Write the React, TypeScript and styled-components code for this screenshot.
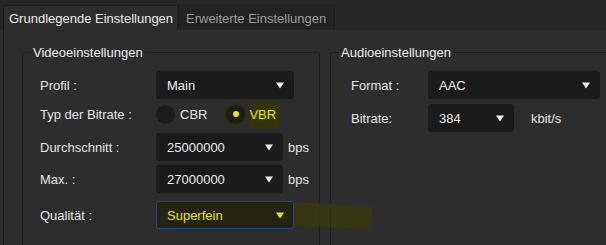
import styled, { createGlobalStyle } from "styled-components"

const GlobalStyle = createGlobalStyle`
    body {
        margin: 0;
        background: #2d2d2d;
        font-family: "Liberation Sans", Arial, sans-serif;
        font-size: 13px;
        color: #e4e4e4;
    }
`

const Caret = ({ color = "#f0f0f0" }: { color?: string }) => (
    <svg width="8" height="7" viewBox="0 0 8 7">
        <path d="M0 0.5 H8 L4 6.5 Z" fill={color} />
    </svg>
)

type DropdownProps = { value: string; width: number; active?: boolean }

const Dropdown = ({ value, width, active }: DropdownProps) => (
    <Select $width={width} $active={active}>
        <span>{value}</span>
        <Caret color={active ? "#e6e600" : "#f0f0f0"} />
    </Select>
)

export default function App() {
    return (
        <>
            <GlobalStyle />
            <Window>
                <TabBar>
                    <Tab $active>Grundlegende Einstellungen</Tab>
                    <Tab>Erweiterte Einstellungen</Tab>
                </TabBar>
                <Panel>
                    <Group $width={298}>
                        <legend>Videoeinstellungen</legend>
                        <VideoGrid>
                            <Label>Profil :</Label>
                            <Dropdown value="Main" width={138} />

                            <Label>Typ der Bitrate :</Label>
                            <RadioRow>
                                <Radio>
                                    <Dot />
                                    <RadioText>CBR</RadioText>
                                </Radio>
                                <Radio>
                                    <Dot $checked />
                                    <RadioText $checked>VBR</RadioText>
                                </Radio>
                            </RadioRow>

                            <Label>Durchschnitt :</Label>
                            <Field>
                                <Dropdown value="25000000" width={127} />
                                <Unit>bps</Unit>
                            </Field>

                            <Label>Max. :</Label>
                            <Field>
                                <Dropdown value="27000000" width={127} />
                                <Unit>bps</Unit>
                            </Field>

                            <Label>Qualität :</Label>
                            <Field>
                                <Dropdown value="Superfein" width={138} active />
                                <Marker width="220" height="40" viewBox="0 0 220 40">
                                    <path
                                        d="M134 5 L175 7 L216 10 L214 32 L170 30 L136 28 Z"
                                        fill="#3c3c00"
                                        opacity="0.6"
                                    />
                                    <path d="M3 28 L24 29 L23 32 L4 33 Z" fill="#3c3c00" opacity="0.6" />
                                </Marker>
                            </Field>
                        </VideoGrid>
                    </Group>
                    <Group $width={290}>
                        <legend>Audioeinstellungen</legend>
                        <AudioGrid>
                            <Label>Format :</Label>
                            <Dropdown value="AAC" width={172} />

                            <Label>Bitrate:</Label>
                            <Field $gap={17}>
                                <Dropdown value="384" width={86} />
                                <Unit>kbit/s</Unit>
                            </Field>
                        </AudioGrid>
                    </Group>
                </Panel>
            </Window>
        </>
    )
}

const Window = styled.div`
    width: 606px;
    height: 245px;
    overflow: hidden;
    display: flex;
    flex-direction: column;
    background: #2d2d2d;
`

const TabBar = styled.div`
    height: 30px;
    flex: none;
    display: flex;
    align-items: flex-end;
    padding-left: 3px;
    background: #262626;
`

const Tab = styled.div<{ $active?: boolean }>`
    height: 25px;
    box-sizing: border-box;
    padding: 0 ${(p) => (p.$active ? "7px 0 5px" : "9px 0 7px")};
    display: flex;
    align-items: center;
    border: 1px solid #1c1c1c;
    border-bottom: none;
    background: ${(p) => (p.$active ? "#2d2d2d" : "#222222")};
    color: ${(p) => (p.$active ? "#ececec" : "#9c9c9c")};
    width: ${(p) => (p.$active ? "175px" : "157px")};
    white-space: nowrap;
`

const Panel = styled.div`
    flex: 1;
    margin-left: 3px;
    border-left: 1px solid #1c1c1c;
    padding: 15px 0 0 18px;
    display: flex;
    gap: 10px;
    align-items: flex-start;
`

const Group = styled.fieldset<{ $width: number }>`
    flex: none;
    width: ${(p) => p.$width}px;
    box-sizing: border-box;
    margin: 0;
    height: 260px;
    border: 1px solid #1f1f1f;
    border-radius: 2px;
    padding: 11px 0 0 0;

    legend {
        margin-left: 8px;
        padding: 0 2px;
        color: #ececec;
        line-height: 15px;
    }
`

const VideoGrid = styled.div`
    display: grid;
    grid-template-columns: 116px 1fr;
    grid-template-rows: 28px 30px 36px 28px 44px;
    align-items: center;
    padding-left: 17px;
`

const AudioGrid = styled.div`
    display: grid;
    grid-template-columns: 77px 1fr;
    grid-template-rows: 28px 30px;
    row-gap: 4px;
    align-items: center;
    padding-left: 20px;
`

const Label = styled.div`
    color: #e4e4e4;
    white-space: nowrap;
`

const Select = styled.div<{ $width: number; $active?: boolean }>`
    position: relative;
    z-index: 1;
    width: ${(p) => p.$width}px;
    height: 28px;
    box-sizing: border-box;
    display: flex;
    align-items: center;
    justify-content: space-between;
    padding: 0 9px 0 10px;
    border-radius: 3px;
    border: 1px solid ${(p) => (p.$active ? "#24468c" : "#1b1b1b")};
    background: ${(p) => (p.$active ? "#242410" : "#1b1b1b")};
    color: ${(p) => (p.$active ? "#e6e600" : "#ececec")};
`

const Field = styled.div<{ $gap?: number }>`
    position: relative;
    display: flex;
    align-items: center;
    gap: ${(p) => p.$gap ?? 5}px;
`

const Unit = styled.span`
    color: #e4e4e4;
`

const RadioRow = styled.div`
    display: flex;
    align-items: center;
    gap: 16px;
`

const Radio = styled.div`
    display: flex;
    align-items: center;
    gap: 5px;
`

const RadioText = styled.span<{ $checked?: boolean }>`
    color: ${(p) => (p.$checked ? "#e6e600" : "#e4e4e4")};
    background: ${(p) => (p.$checked ? "#33330c" : "transparent")};
    padding: 6px 3px 6px 0;
    margin-left: ${(p) => (p.$checked ? "-1px" : "0")};
`

const Dot = styled.div<{ $checked?: boolean }>`
    width: 19px;
    height: 19px;
    border-radius: 50%;
    background: #1c1c1c;
    box-shadow: ${(p) => (p.$checked ? "0 0 0 2px #2f2f0c" : "none")};
    display: flex;
    align-items: center;
    justify-content: center;
    &::after {
        content: "";
        display: ${(p) => (p.$checked ? "block" : "none")};
        width: 6px;
        height: 6px;
        border-radius: 50%;
        background: #eaea00;
    }
`

const Marker = styled.svg`
    position: absolute;
    left: 0;
    top: -4px;
    pointer-events: none;
`
